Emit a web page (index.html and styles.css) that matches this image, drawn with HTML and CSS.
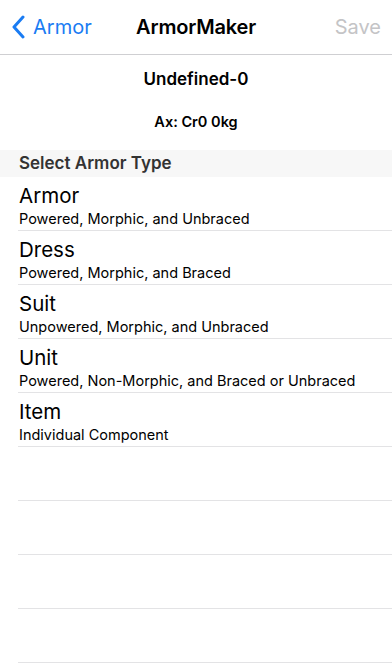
FILE: index.html
```html
<!DOCTYPE html>
<html>
<head>
<meta charset="utf-8">
<link rel="stylesheet" href="styles.css">
</head>
<body>
<div class="screen">
  <header class="navbar">
    <div class="nav-left">
      <svg class="chevron" width="14" height="24" viewBox="0 0 14 24"><path d="M12 2 L3 12 L12 22" fill="none" stroke="#1a7cf3" stroke-width="3" stroke-linecap="round" stroke-linejoin="round"/></svg>
      <span class="back-text">Armor</span>
    </div>
    <div class="nav-title">ArmorMaker</div>
    <div class="nav-right">Save</div>
  </header>
  <div class="summary">
    <div class="name">Undefined-0</div>
    <div class="stats">Ax: Cr0 0kg</div>
  </div>
  <div class="section-header">Select Armor Type</div>
  <ul class="list">
    <li class="row"><div class="title">Armor</div><div class="sub">Powered, Morphic, and Unbraced</div></li>
    <li class="row"><div class="title">Dress</div><div class="sub">Powered, Morphic, and Braced</div></li>
    <li class="row"><div class="title">Suit</div><div class="sub">Unpowered, Morphic, and Unbraced</div></li>
    <li class="row"><div class="title">Unit</div><div class="sub">Powered, Non-Morphic, and Braced or Unbraced</div></li>
    <li class="row"><div class="title">Item</div><div class="sub">Individual Component</div></li>
    <li class="row empty"></li>
    <li class="row empty"></li>
    <li class="row empty"></li>
    <li class="row empty"></li>
  </ul>
</div>
</body>
</html>
```
FILE: styles.css
```css
* { box-sizing: border-box; }
html, body { margin: 0; padding: 0; background: #fff; }
body { font-family: Inter, "Liberation Sans", sans-serif; color: #000; }
.screen { width: 392px; height: 671px; overflow: hidden; }
.navbar {
  height: 55px;
  display: grid;
  grid-template-columns: 1fr auto 1fr;
  align-items: center;
  border-bottom: 1px solid #cfcfd2;
  padding: 0 11px 0 11px;
}
.nav-left { display: flex; align-items: center; gap: 8px; color: #1a7cf3; font-size: 20px; }
.chevron { display: block; }
.nav-title { font-weight: 600; font-size: 20px; letter-spacing: -0.2px; }
.nav-right { justify-self: end; color: #c4c4c6; font-size: 20px; }
.summary { height: 95px; display: flex; flex-direction: column; align-items: center; }
.name { font-weight: 600; font-size: 17px; margin-top: 14px; }
.stats { font-weight: 600; font-size: 14.5px; margin-top: 24px; }
.section-header {
  height: 27px;
  background: #f7f7f7;
  padding-left: 19px;
  font-weight: 600;
  font-size: 17px;
  color: #333;
  line-height: 27px;
}
.list { list-style: none; margin: 0; padding: 0 0 0 18px; }
.row { height: 54px; border-bottom: 1px solid #e3e3e5; padding: 7px 0 0 1px; }
.title { font-size: 20.5px; line-height: 24px; }
.sub { font-size: 14.5px; line-height: 18px; margin-top: 2px; }
```
